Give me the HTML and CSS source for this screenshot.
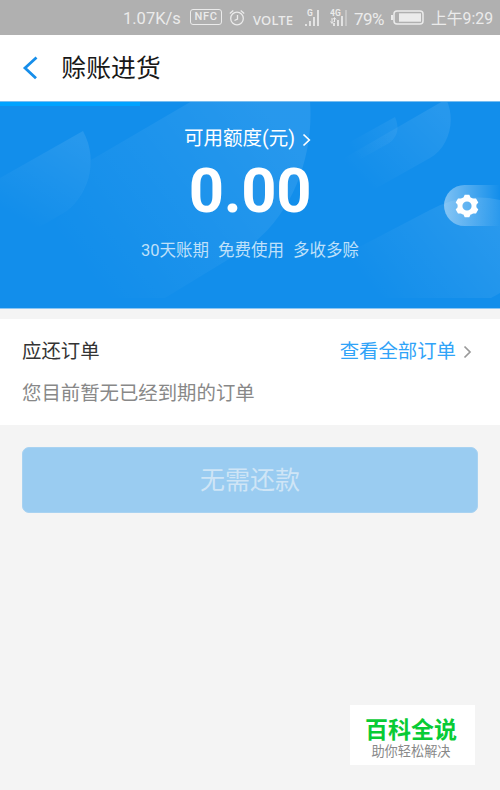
FILE: index.html
```
<!DOCTYPE html>
<html lang="zh-CN">
<head>
<meta charset="utf-8">
<title>赊账进货</title>
<link rel="stylesheet" href="styles.css">
</head>
<body>
<div class="status">
  <span class="speed">1.07K/s</span>
  <span class="nfc">NFC</span>
  <svg class="alarm" width="16" height="18" viewBox="0 0 16 18"><circle cx="8" cy="9.5" r="6.3"/><path d="M8.5 6V10L5.5 11.5M.8 4.5 4.3 1.6M15.2 4.5 11.7 1.6"/></svg>
  <span class="volte">VOLTE</span>
  <svg class="signal g1" width="14" height="18" viewBox="0 0 14 18"><path d="M1 15v2M5 12v5M9 8v9M13 1v16"/><text x="2" y="7">G</text></svg>
  <svg class="signal g2" width="17" height="18" viewBox="0 0 17 18"><path d="M4 14v3M8 11v6M12 7v10"/><path class="dim" d="M16 1v16"/><path class="thin" d="M2 9v5M.5 12.5l1.5 2 1.5-2M4.5 13V9M3 10.5l1.5-2 1.5 2"/><text x="0" y="7">4G</text></svg>
  <span class="percent">79%</span>
  <svg class="battery" width="33" height="15" viewBox="0 0 33 15"><rect x="3" y="1" width="29" height="13" rx="3"/><path class="fill" d="M0 5h2v5H0z"/><path class="fill" d="M8 3.3h22v8.4H8z"/></svg>
  <span class="clock">上午9:29</span>
</div>
<header class="header">
  <svg class="back" width="17" height="24" viewBox="0 0 17 24"><path d="M14.5 1.5 3 12 14 22.3"/></svg>
  <h1>赊账进货</h1>
</header>
<section class="hero">
  <svg class="waves" width="500" height="207" viewBox="0 102 500 207">
    <defs>
      <linearGradient id="a" gradientUnits="userSpaceOnUse" x1="80" y1="140" x2="30" y2="226"><stop stop-color="#fff" stop-opacity=".09"/><stop offset="1" stop-color="#fff" stop-opacity="0"/></linearGradient>
      <linearGradient id="b" gradientUnits="userSpaceOnUse" x1="270" y1="110" x2="75" y2="260"><stop stop-color="#fff" stop-opacity=".09"/><stop offset="1" stop-color="#fff" stop-opacity="0"/></linearGradient>
      <linearGradient id="c" gradientUnits="userSpaceOnUse" x1="440" y1="110" x2="365" y2="185"><stop stop-color="#fff" stop-opacity=".09"/><stop offset="1" stop-color="#fff" stop-opacity="0"/></linearGradient>
      <linearGradient id="d" gradientUnits="userSpaceOnUse" x1="396" y1="125" x2="352" y2="152"><stop stop-color="#fff" stop-opacity=".06"/><stop offset="1" stop-color="#fff" stop-opacity="0"/></linearGradient>
      <linearGradient id="e" gradientUnits="userSpaceOnUse" x1="490" y1="205" x2="375" y2="295"><stop stop-color="#fff" stop-opacity=".1"/><stop offset="1" stop-color="#fff" stop-opacity="0"/></linearGradient>
    </defs>
    <path fill="url(#a)" d="M0 178 83 131C100 162 87 199 62 214L0 250z"/>
    <path fill="url(#b)" d="M192 101H310C314 154 294 215 247 248L165 298H40V242L62 214C78 203 90 185 91 160z"/>
    <path fill="url(#c)" d="M443 101H447C456 122 448 148 430 158L350 203 320 172z"/>
    <path fill="url(#d)" d="M395 117C401 131 396 141 382 147L350 165 330 153z"/>
    <path fill="url(#e)" d="M340 257 430 210Q464 192 500 200V293L491 298H330z"/>
  </svg>
  <div class="progress"></div>
  <div class="label">可用额度(元)<svg width="9" height="14" viewBox="0 0 9 14"><path d="M1.5 1.5 7.3 7 1.5 12.5"/></svg></div>
  <div class="amount">0.00</div>
  <div class="perks"><span>30天账期</span><span>免费使用</span><span>多收多赊</span></div>
  <div class="settings"><svg width="24" height="24" viewBox="-12 -12 24 24"><path fill-rule="evenodd" d="M-2.3-11.3H2.3L3.6-8.6Q5-8.2 6-7.4L9-7.6 11.3-3.6 9.4-1.2V1.2L11.3 3.6 9 7.6 6 7.4Q5 8.2 3.6 8.6L2.3 11.3H-2.3L-3.6 8.6Q-5 8.2-6 7.4L-9 7.6-11.3 3.6-9.4 1.2V-1.2L-11.3-3.6-9-7.6-6-7.4Q-5-8.2-3.6-8.6zM0-4.6A4.6 4.6 0 1 0 0 4.6 4.6 4.6 0 1 0 0-4.6z"/></svg></div>
</section>
<section class="orders">
  <div class="row"><h2>应还订单</h2><a class="all">查看全部订单<svg width="9" height="14" viewBox="0 0 9 14"><path d="M1.5 1.5 7 7 1.5 12.5"/></svg></a></div>
  <p>您目前暂无已经到期的订单</p>
</section>
<button class="pay" disabled>无需还款</button>
<div class="brand"><strong>百科全说</strong><span>助你轻松解决</span></div>
</body>
</html>
```
FILE: styles.css
```
* { box-sizing: border-box; }
body {
  margin: 0;
  width: 500px;
  height: 790px;
  overflow: hidden;
  position: relative;
  background: #f4f4f4;
  font-family: Roboto, "Noto Sans CJK SC", sans-serif;
}
svg { display: block; flex: none; }
h1, h2, p { margin: 0; font-weight: 400; }

.status {
  height: 35px;
  padding: 1px 0 0 123px;
  display: flex;
  align-items: center;
  background: #b0b0b0;
  color: #ebebeb;
  font-size: 17px;
  line-height: 24px;
  white-space: nowrap;
}
.status span { flex: none; }
.speed { width: 67px; font-size: 16.5px; padding-top: 2px; }
.nfc {
  width: 32px;
  height: 16px;
  margin-top: -2px;
  border: 1.5px solid #ebebeb;
  border-radius: 3px;
  font-size: 11px;
  font-weight: 500;
  line-height: 14px;
  text-align: center;
  letter-spacing: .6px;
}
.alarm { margin: -1px 0 0 7px; fill: none; stroke: #ebebeb; stroke-width: 1.3; }
.volte { width: 53px; margin-left: 8px; font: 500 13px/24px "Noto Sans", sans-serif; padding-top: 3px; letter-spacing: .2px; }
.signal { margin-top: -1px; fill: none; stroke: #ebebeb; stroke-width: 1.7; }
.signal text { fill: #ebebeb; stroke: none; font-size: 8.5px; font-weight: 700; }
.signal .dim { stroke: #cacaca; }
.signal .thin { stroke-width: 1; }
.g1 { margin-left: -1px; }
.g2 { margin-left: 11px; }
.percent { width: 31px; margin-left: 7px; letter-spacing: -.5px; padding-top: 1px; }
.battery { margin: -1px 0 0 6px; fill: none; stroke: #ebebeb; stroke-width: 1.5; }
.battery .fill { fill: #ebebeb; stroke: none; }
.clock { margin-left: 7px; font-size: 15.8px; padding-top: 1px; }

.header {
  height: 66px;
  padding-left: 22px;
  display: flex;
  align-items: center;
  background: #fff;
}
.back { fill: none; stroke: #168eea; stroke-width: 2.8; }
h1 { margin: 1px 0 0 22.5px; font-size: 24.8px; line-height: 36px; color: #181818; }

.hero {
  position: relative;
  height: 208px;
  background: #128eeb;
  color: #fff;
  display: flex;
  flex-direction: column;
  align-items: center;
  border-top: 1px solid #78bdf0;
  border-bottom: 1px solid #8bc6f3;
}
.waves { position: absolute; left: 0; top: 0; }
.progress { position: absolute; left: 0; top: 0; width: 140px; height: 4px; background: #00a3ff; }
.label { position: relative; display: flex; align-items: center; margin: 22px 0 0 -5px; font-size: 19.5px; line-height: 30px; }
.label svg { margin: 1px 0 0 7px; fill: none; stroke: #fff; stroke-width: 1.7; }
.amount { position: relative; margin-top: 2px; font-size: 61.5px; line-height: 70px; font-weight: 700; letter-spacing: -.3px; }
.perks { position: relative; display: flex; gap: 9px; margin-top: 13px; font-size: 16.5px; line-height: 24px; color: #bfe0fa; }
.settings {
  position: absolute;
  right: 0;
  top: 83px;
  width: 56px;
  height: 41px;
  padding-left: 11px;
  display: flex;
  align-items: center;
  border-radius: 21px 0 0 21px;
  background: linear-gradient(90deg, rgba(255,255,255,.45), rgba(255,255,255,0));
}
.settings svg { fill: #fff; }

.orders { margin-top: 10px; height: 106px; padding: 18px 28px 0 22px; background: #fff; }
.row { display: flex; justify-content: space-between; align-items: center; line-height: 30px; }
h2 { font-size: 19.4px; color: #333; }
.all { display: flex; align-items: center; font-size: 19.4px; color: #30a3f8; }
.all svg { margin: 0 0 0 7px; fill: none; stroke: #999; stroke-width: 1.7; }
.orders p { margin-top: 12px; font-size: 19.4px; line-height: 30px; color: #888; }

.pay {
  display: block;
  width: 456px;
  height: 66px;
  margin: 22px 0 0 22px;
  padding: 0 0 5px;
  border: 1px solid #a8d2f1;
  border-radius: 7px;
  background: #9accf1;
  color: #cfe5f6;
  font: 400 25px "Noto Sans CJK SC", sans-serif;
}
.brand {
  position: absolute;
  left: 350px;
  top: 705px;
  width: 125px;
  height: 60px;
  padding: 10px 0 0 0;
  background: #fff;
  text-align: center;
}
.brand strong { display: block; margin-left: -3px; font-size: 23px; line-height: 31px; color: #08cb35; }
.brand span { display: block; margin-left: -3px; font-size: 13.2px; line-height: 12px; color: #888; }
```
